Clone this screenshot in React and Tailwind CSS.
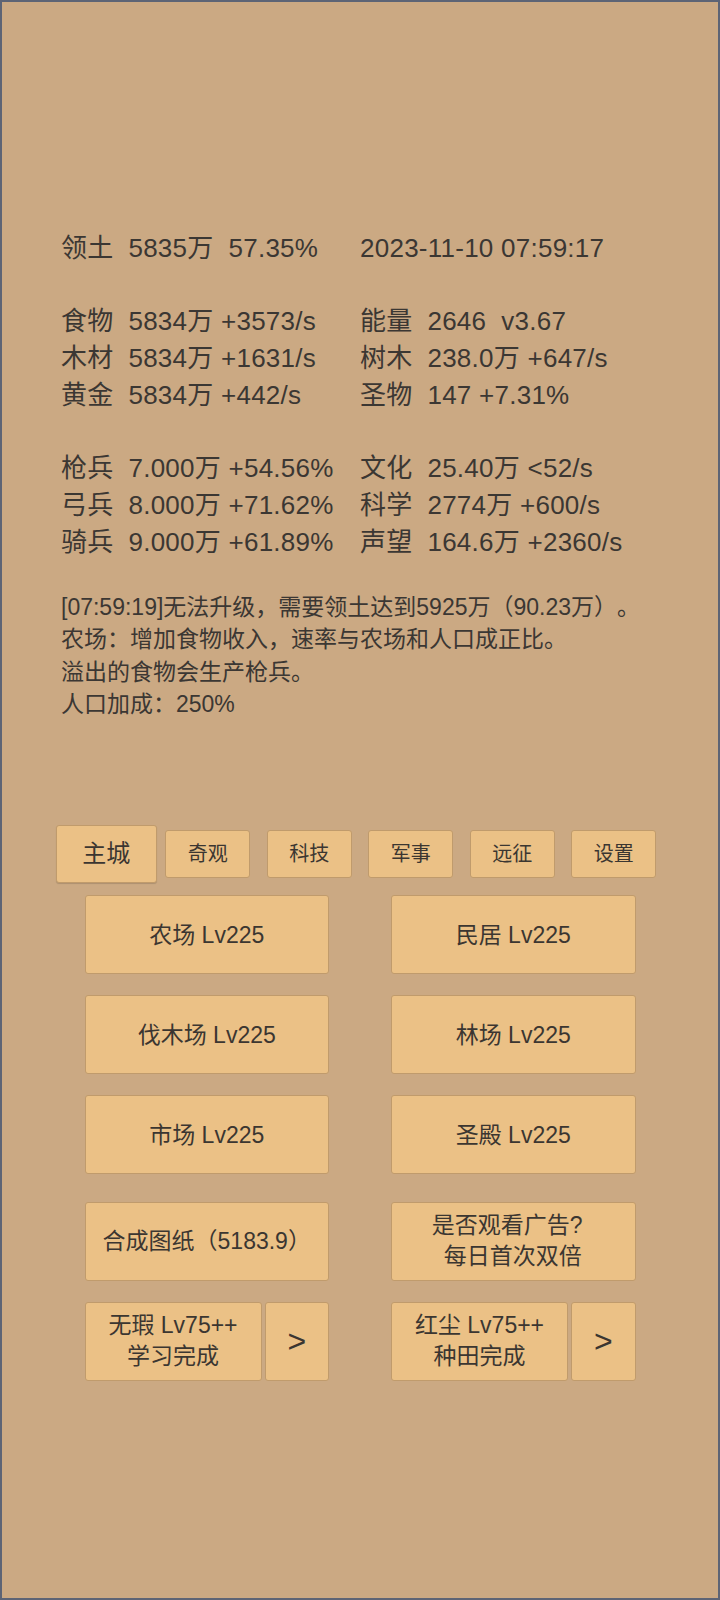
import React from "react";

const stats = [
  ["领土  5835万  57.35%", "2023-11-10 07:59:17"],
  ["", ""],
  ["食物  5834万 +3573/s", "能量  2646  v3.67"],
  ["木材  5834万 +1631/s", "树木  238.0万 +647/s"],
  ["黄金  5834万 +442/s", "圣物  147 +7.31%"],
  ["", ""],
  ["枪兵  7.000万 +54.56%", "文化  25.40万 <52/s"],
  ["弓兵  8.000万 +71.62%", "科学  2774万 +600/s"],
  ["骑兵  9.000万 +61.89%", "声望  164.6万 +2360/s"],
];

const messages = [
  "[07:59:19]无法升级，需要领土达到5925万（90.23万）。",
  "农场：增加食物收入，速率与农场和人口成正比。",
  "溢出的食物会生产枪兵。",
  "人口加成：250%",
];

const tabs = ["主城", "奇观", "科技", "军事", "远征", "设置"];

const buildings = [
  ["农场 Lv225", "民居 Lv225"],
  ["伐木场 Lv225", "林场 Lv225"],
  ["市场 Lv225", "圣殿 Lv225"],
];

const btn =
  "bg-[#ebc186] border border-[#c09b6c] rounded-[3px] text-[#3b3631] flex items-center justify-center";

function SplitButton({ top, bottom }) {
  return (
    <div className="flex h-[79px] gap-[3px]">
      <div className={`${btn} w-[177px] flex-col text-[23px] leading-[31px]`}>
        <span>{top}</span>
        <span>{bottom}</span>
      </div>
      <div className={`${btn} flex-1 text-[32px]`}>&gt;</div>
    </div>
  );
}

export default function App() {
  return (
    <div
      className="w-[720px] h-[1600px] border-2 border-[#5d6475] bg-[#cba983] text-[#3b3733] overflow-hidden [text-spacing-trim:space-all]"
      style={{ fontFamily: '"Liberation Sans", "Noto Sans CJK SC", sans-serif' }}
    >
      <div className="pt-[228px] pl-[59px]">
        <div className="grid grid-cols-[299px_1fr] text-[26px] leading-[36.7px] tracking-[0.25px] whitespace-pre">
          {stats.map(([l, r], i) => (
            <React.Fragment key={i}>
              <div className="h-[36.7px]">{l}</div>
              <div className="h-[36.7px]">{r}</div>
            </React.Fragment>
          ))}
        </div>

        <div className="mt-[31px] text-[23px] leading-[32.3px]">
          {messages.map((m) => (
            <div key={m}>{m}</div>
          ))}
        </div>
      </div>

      <div className="w-[609px] mx-auto mt-[105px] flex h-[58px]">
        {tabs.map((t, i) => (
          <div key={t} className="w-[101.5px] flex items-center justify-center">
            {i === 0 ? (
              <div className={`${btn} w-full h-full text-[24px] border-[#9f825e] shadow-[0_1px_1px_rgba(0,0,0,0.15)]`}>
                {t}
              </div>
            ) : (
              <div className={`${btn} w-[85px] h-[48px] text-[20px]`}>{t}</div>
            )}
          </div>
        ))}
      </div>

      <div className="w-[551px] mx-auto mt-[12px] grid grid-cols-2 gap-x-[62px]">
        {buildings.map(([a, b], i) => (
          <React.Fragment key={a}>
            <div className={`${btn} h-[79px] text-[23px] ${i > 0 ? "mt-[21px]" : ""}`}>{a}</div>
            <div className={`${btn} h-[79px] text-[23px] ${i > 0 ? "mt-[21px]" : ""}`}>{b}</div>
          </React.Fragment>
        ))}

        <div className={`${btn} h-[79px] mt-[27.5px] text-[23px]`}>合成图纸（5183.9）</div>
        <div className={`${btn} h-[79px] mt-[27.5px] text-[23px] leading-[31px]`}>
          <div className="text-left">
            <div className="-ml-[12px]">是否观看广告?</div>
            <div>每日首次双倍</div>
          </div>
        </div>

        <div className="mt-[21px]">
          <SplitButton top="无瑕 Lv75++" bottom="学习完成" />
        </div>
        <div className="mt-[21px]">
          <SplitButton top="红尘 Lv75++" bottom="种田完成" />
        </div>
      </div>
    </div>
  );
}
